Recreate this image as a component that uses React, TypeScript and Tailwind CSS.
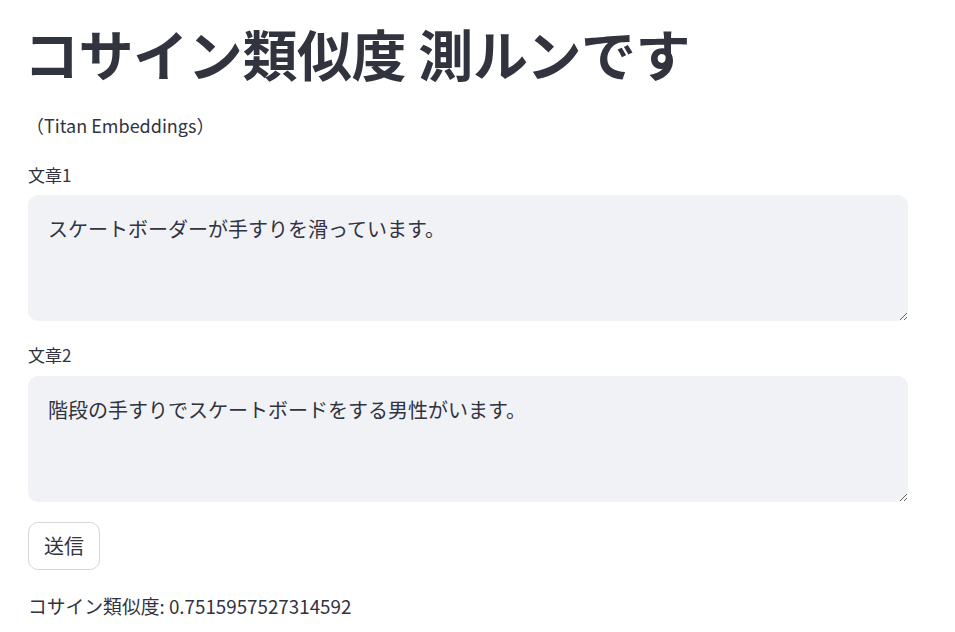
import { useState } from 'react';

const FONT = "font-['Noto_Sans_CJK_JP','Noto_Sans',sans-serif]";

export default function App() {
  const [text1, setText1] = useState('スケートボーダーが手すりを滑っています。');
  const [text2, setText2] = useState('階段の手すりでスケートボードをする男性がいます。');
  const [score] = useState('0.7515957527314592');

  return (
    <div className={`min-h-screen bg-white text-[#31333f] ${FONT}`}>
      <div className="w-[880px] ml-[28px] flex flex-col">
        {/* Title */}
        <h1 className="pt-[19px] -ml-[4px] text-[55px] leading-[66px] font-bold tracking-[-0.4px]">
          コサイン類似度 測ルンです
        </h1>
        <p className="mt-[25px] -ml-[2px] text-[18px] leading-[30px]">（Titan Embeddings）</p>

        {/* 文章1 */}
        <label className="mt-[23px] text-[17px] leading-[24px]">文章1</label>
        <textarea
          value={text1}
          onChange={(e) => setText1(e.target.value)}
          className="mt-[8px] h-[126px] w-full rounded-[10px] bg-[#f0f2f6] px-[20px] pt-[20px] text-[20px] leading-[28px] text-[#31333f] outline-none"
        />

        {/* 文章2 */}
        <label className="mt-[22px] text-[17px] leading-[24px]">文章2</label>
        <textarea
          value={text2}
          onChange={(e) => setText2(e.target.value)}
          className="mt-[9px] h-[126px] w-full rounded-[10px] bg-[#f0f2f6] px-[20px] pt-[20px] text-[20px] leading-[28px] text-[#31333f] outline-none"
        />

        <div className="mt-[20px]">
          <button className="h-[48px] w-[72px] rounded-[10px] border border-[#d6d6d9] bg-white text-[20px] text-[#31333f]">
            送信
          </button>
        </div>

        <p className="mt-[21px] text-[18.8px] leading-[30px]">コサイン類似度: {score}</p>
      </div>
    </div>
  );
}
